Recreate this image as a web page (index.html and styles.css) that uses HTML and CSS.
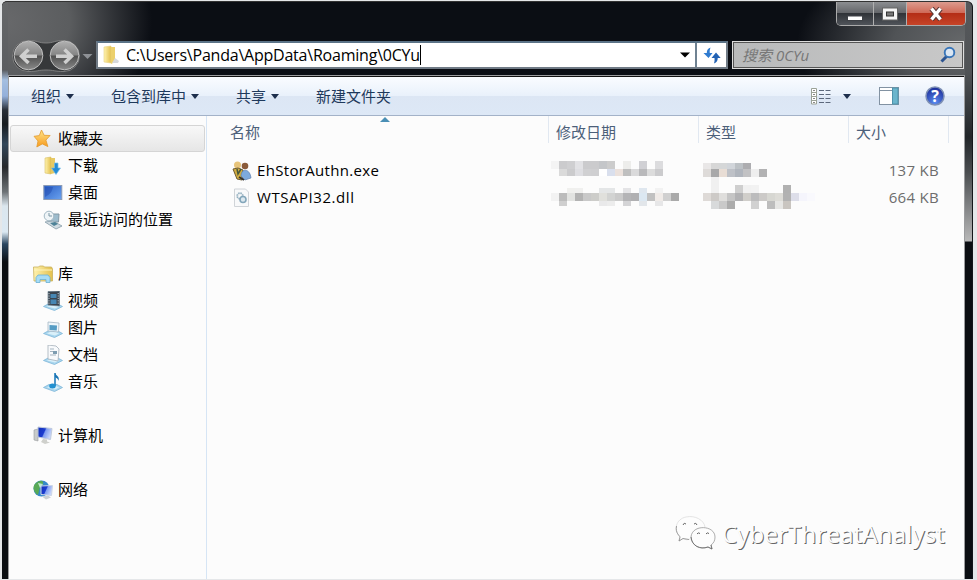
FILE: index.html
```
<!DOCTYPE html>
<html lang="zh-CN">
<head>
<meta charset="utf-8">
<title>0CYu</title>
<link rel="stylesheet" href="styles.css">
</head>
<body>
<svg width="0" height="0" class="defs" aria-hidden="true">
  <defs>
    <linearGradient id="gold" x1="0" x2="1"><stop offset="0" stop-color="#fff3b0"/><stop offset="1" stop-color="#e3c04e"/></linearGradient>
    <linearGradient id="screen" x1="0" y1="0" x2="1" y2=".4"><stop offset="0" stop-color="#1230b8"/><stop offset=".5" stop-color="#1c3cd0"/><stop offset=".58" stop-color="#7f9cf0"/><stop offset="1" stop-color="#c8d6fa"/></linearGradient>
    <linearGradient id="desk" x1="0" y1="0" x2="1" y2="1"><stop offset="0" stop-color="#2a5fc4"/><stop offset="1" stop-color="#6aa2f0"/></linearGradient>
    <linearGradient id="orb" x1="0" y1="0" x2="0" y2="1"><stop offset="0" stop-color="#b0b0b0"/><stop offset=".48" stop-color="#858585"/><stop offset=".52" stop-color="#505050"/><stop offset="1" stop-color="#8a8a8a"/></linearGradient>
    <linearGradient id="star" x1="0" y1="0" x2="0" y2="1"><stop offset="0" stop-color="#ffe58a"/><stop offset="1" stop-color="#f79a1c"/></linearGradient>
    <radialGradient id="help" cx=".5" cy=".85" r=".8"><stop offset="0" stop-color="#5b8cf0"/><stop offset="1" stop-color="#1d2f9c"/></radialGradient>
    <g id="tray"><path d="M.5 15.500l5.500-3h8l5.500 3-8 4z" fill="#a9d6ee" stroke="#7fb6d8" stroke-width=".8"/><path d="M4 15.500l3-1.500h6l3 1.500-4 2z" fill="#d9f0fa"/></g>
  </defs>
</svg>
<div class="window">
  <header class="title">
    <div class="captions">
      <button class="cap min" aria-label="最小化"><svg width="18" height="8"><rect x="1.500" y="2" width="15" height="4.500" fill="#fff" stroke="#3e4146"/></svg></button>
      <button class="cap max" aria-label="最大化"><svg width="18" height="14"><rect x="1.500" y="1" width="15" height="12" fill="#f5f5f5" stroke="#666"/><rect x="5.500" y="5" width="7" height="4" fill="#777" stroke="#333"/></svg></button>
      <button class="cap close" aria-label="关闭"><svg width="18" height="14"><path d="M4.500 1.500l9 11M13.500 1.500l-9 11" stroke="#5a3a38" stroke-width="5.400"/><path d="M4.500 1.500l9 11M13.500 1.500l-9 11" stroke="#fff" stroke-width="3.400"/></svg></button>
    </div>
  </header>
  <div class="nav">
    <svg class="orbs" width="82" height="36" viewBox="0 0 82 36">
      <path d="M17 2.500C27 2.500 27 5 35 5S43 2.500 53 2.500a15.500 15.500 0 0 1 0 31C43 33.500 43 32 35 32S27 33.500 17 33.500a15.500 15.500 0 0 1 0-31z" fill="#36383a" stroke="#8b8b8b" stroke-opacity=".8"/>
      <circle cx="17.500" cy="17.500" r="14.300" fill="url(#orb)" stroke="#c0c0c0"/>
      <circle cx="53.500" cy="17.500" r="14.300" fill="url(#orb)" stroke="#c0c0c0"/>
      <path d="M26 18.200H11.500M17.500 11.500l-7 6.700 7 6.700" fill="none" stroke="#cfcfcf" stroke-width="3.500"/>
      <path d="M45 18.200h14.500M53.500 11.500l7 6.700-7 6.700" fill="none" stroke="#cfcfcf" stroke-width="3.500"/>
      <path d="M71.500 16h10l-5 5z" fill="#8e9196"/>
    </svg>
    <div class="address">
      <svg width="20" height="20" viewBox="0 0 20 20"><path d="M3 2l7-1v17l-7-1z" fill="url(#gold)" stroke="#e6d080" stroke-width=".6"/><path d="M10 2h4v15l-4 2z" fill="#ecd06c"/><path d="M14 13l4 3-1 2h-6z" fill="#d6d9dc"/></svg>
      <span class="path">C:\Users\Panda\AppData\Roaming\0CYu</span><i class="caret"></i>
      <svg class="drop" width="10" height="6"><path d="M0 .5h10L5 5.500z" fill="#000"/></svg>
      <span class="refresh"><svg width="18" height="18" viewBox="0 0 18 18"><path d="M7.500 1.500C4.500 2.500 3.800 4.500 3.800 7H.5L5.500 12 9.500 7H6.800C6.500 4.500 7 3 7.500 1.500z" fill="#2f7bd0"/><path d="M11 17.500c3-1 3.700-3 3.700-5.500h3L13 6.500 8.500 12h3c.2 2.500 0 4-.5 5.500z" fill="#2262b4"/></svg></span>
    </div>
    <div class="search"><span>搜索 0CYu</span><svg width="18" height="18" viewBox="0 0 18 18"><path d="M8 10L2.500 15.500" stroke="#2d5490" stroke-width="3"/><circle cx="10.500" cy="6.500" r="4.800" fill="#dbe6f2" stroke="#3975b8" stroke-width="1.900"/></svg></div>
  </div>
  <div class="client">
    <div class="commands">
      <span class="cmd c1">组织<i></i></span><span class="cmd c2">包含到库中<i></i></span><span class="cmd c3">共享<i></i></span><span class="cmd c4">新建文件夹</span>
      <div class="tools">
        <svg width="20" height="17" viewBox="0 0 20 17"><g fill="#fff" stroke="#9ba297"><path d="M.5.500h5v15.500h-5zM.5 4.500h5M.5 8.500h5M.5 12.500h5"/></g><path d="M2 2.500h2M2 6.500h2M2 10.500h2M2 14.500h2" stroke="#888"/><path d="M8 2.500h12M8 6.500h12M8 10.500h12M8 14.500h12" stroke="#5c687c" stroke-dasharray="5 1.500"/></svg>
        <i class="arrow"></i>
        <svg class="pane" width="20" height="18"><rect x=".5" y=".5" width="19" height="17" fill="#fff" stroke="#8292a2"/><path d="M1 3.500h13" stroke="#8292a2"/><rect x="13.500" y="1" width="5.500" height="16" fill="#6bb5cc" stroke="#4f93ac"/></svg>
        <svg width="20" height="20"><circle cx="10" cy="10" r="9" fill="url(#help)" stroke="#7d8fb4" stroke-width="1.500"/><text x="10" y="15.500" text-anchor="middle" class="qmark">?</text></svg>
      </div>
    </div>
    <div class="panes">
      <nav class="side">
        <div class="row root selected"><svg viewBox="0 0 20 20"><path d="M8.500 1l2.600 5.300 6 .2-4.200 4.600 2 6.500-5.600-2.700L3.800 18 5 12 1 7.300l5.300-.7z" fill="url(#star)" stroke="#e39a2e" stroke-width=".8"/></svg>收藏夹</div>
        <div class="row"><svg viewBox="0 0 20 20"><path d="M2 2l6-1v17l-6-1z" fill="url(#gold)" stroke="#d6bd62" stroke-width=".6"/><path d="M8 2h4v15l-4 1z" fill="#e7c964"/><path d="M11.500 7h3.500v5h2.500l-4.500 6.500L8.500 12h3z" fill="#258bd6" stroke="#76bdea" stroke-width=".7"/></svg>下载</div>
        <div class="row"><svg viewBox="0 0 20 20"><rect x=".8" y="2.500" width="18" height="14" fill="url(#desk)" stroke="#8c9bb4"/><path d="M2 14C8 11 9 8 10 4H2z" fill="#2047aa" opacity=".45"/></svg>桌面</div>
        <div class="row"><svg viewBox="0 0 20 20"><path d="M8 4h8l-.5 8H8z" fill="#9dbccd" stroke="#8499a6"/><circle cx="6" cy="6" r="4.800" fill="#eef4f7" stroke="#a3b8c4"/><path d="M6 3v3h3" stroke="#7b95a3" fill="none"/><path d="M2 12l8-1 9 5-6 3z" fill="#d1dce2" stroke="#98abb6"/><path d="M7 13l5-1 3 2-4 2z" fill="#4d8297"/></svg>最近访问的位置</div>
        <div class="row root group"><svg viewBox="0 0 20 20"><path d="M.5 3h5l1-1h4l1 1h7l1 2v12H1z" fill="url(#gold)" stroke="#c9b15d" stroke-width=".8"/><path d="M1 6h18" stroke="#fff5bd"/><path d="M3 18.500v-5l2-2.500h10l2 2.500v5h-4v-3H7v3z" fill="#a7dcf5" stroke="#69b0d4" stroke-width=".8"/></svg>库</div>
        <div class="row"><svg viewBox="0 0 20 20"><use href="#tray"/><path d="M5 .5l11.500-.5v15L5 14z" fill="#3b4550" stroke="#6a7e8d" stroke-width=".7"/><path d="M7.500 3h6v4h-6zM7.500 8.500h6V13h-6z" fill="#4787b4"/><path d="M6 2v12M15.200 2v12" stroke="#bccad3" stroke-dasharray="1.200"/></svg>视频</div>
        <div class="row"><svg viewBox="0 0 20 20"><use href="#tray"/><path d="M5 4l11 1-.5 9L5 13z" fill="#eff6fa" stroke="#a6b8c5" stroke-width=".8"/><path d="M6.500 7l7.500.5-.3 5-7.200-.5z" fill="#559cc4"/></svg>图片</div>
        <div class="row"><svg viewBox="0 0 20 20"><use href="#tray"/><path d="M5 0l8 1 3 3-1 12-10-2z" fill="#f8fafc" stroke="#a5b0ba" stroke-width=".8"/><path d="M7 4h4M7 6.500h3M7 10h6" stroke="#a6b5c1"/><path d="M10 6h4v3h-4z" fill="#7d9db1"/></svg>文档</div>
        <div class="row"><svg viewBox="0 0 20 20"><use href="#tray"/><path d="M12 1v13" stroke="#207ebd" stroke-width="1.600"/><path d="M12 1c1 3 5 3 3.500 8C15 6 13 6 12 5z" fill="#1a74b3"/><ellipse cx="9.500" cy="14" rx="3.300" ry="2.500" fill="#2190d0"/></svg>音乐</div>
        <div class="row root group"><svg viewBox="0 0 20 20"><path d="M1 4l4-1v12l-4-1z" fill="#c8cbca" stroke="#989c9e" stroke-width=".6"/><path d="M5 1l14 1.500-1.500 11L5 11z" fill="url(#screen)" stroke="#c1cbdc"/><path d="M10 13l4 .5v2l3 1-5 1.500-4-2z" fill="#cfd0cc"/></svg>计算机</div>
        <div class="row root group"><svg viewBox="0 0 20 20"><circle cx="8.500" cy="8.500" r="8" fill="#3589ca"/><path d="M3 3c5-4 8-2 7 1l-3 3-2 8C0 12-1 6 3 3z" fill="#58a956"/><path d="M5 3l5 1-3 4z" fill="#c0ead1"/><path d="M8 6l11.500-.5-1 10-10.500-1z" fill="url(#screen)" stroke="#ccd6e6"/><path d="M9 16.500l6-1 3 2-5 2z" fill="#cbd0d4"/></svg>网络</div>
      </nav>
      <main class="files">
        <div class="cols head"><span>名称</span><span>修改日期</span><span>类型</span><span>大小</span></div>
        <svg class="sort" width="10" height="5"><path d="M0 5l5-5 5 5z" fill="#4a8fb5"/></svg>
        <div class="cols file"><span class="name"><svg width="20" height="20" viewBox="0 0 20 20"><circle cx="5.500" cy="4" r="3.500" fill="#e7c47b"/><circle cx="13" cy="5" r="3.300" fill="#8b5b3a"/><path d="M1 8l5-1 5 2-1 10-5-1z" fill="#d2ad40" stroke="#6b5a32"/><path d="M5 8l1 5 3-5" stroke="#47583b" stroke-width="1.500" fill="none"/><path d="M9 15c0-8 9-8 10 2l-6 2z" fill="#7daadd" stroke="#5576a4" stroke-width=".6"/><path d="M7 16l5 3" stroke="#333" stroke-width="2"/></svg><b class="exe">EhStorAuthn.exe</b></span><span></span><span></span><span class="size">137 KB</span></div>
        <div class="cols file"><span class="name"><svg width="20" height="20" viewBox="0 0 20 20"><path d="M2.500 1h11l3 3v14.500h-14z" fill="#f8f9fa" stroke="#d0d4d8"/><circle cx="8" cy="8" r="2.800" fill="none" stroke="#93afbf" stroke-width="1.800" stroke-dasharray="1.500 .7"/><circle cx="11" cy="11.500" r="3" fill="#dce8ef" stroke="#83a6ba" stroke-width="1.600"/></svg><b class="dll">WTSAPI32.dll</b></span><span></span><span></span><span class="size">664 KB</span></div>
        <svg class="mosaic" id="mosaic" width="264" height="52" viewBox="551 161 264 52" shape-rendering="crispEdges"></svg>
        <div class="brand"><svg width="42" height="36" viewBox="0 0 42 36"><path d="M15 23c-2 1-5 1-7-.5L4 25l1-4C-2 14 1 3 11 1c9-2 18 3 19 10" fill="#fdfdfd" stroke="#ddd" stroke-width=".8"/><path d="M1.500 10C0 17 5 20 5 21l-1 4 4-2.500 6 1" fill="none" stroke="#888" stroke-width=".8"/><path d="M40 21c0-12-23-13-24 0 0 8 9 13 17 10l4 2-1-4c3-2 4-5 4-8z" fill="#fdfdfd" stroke="#999" stroke-width=".8"/><path d="M16 21c1 9 9 13 17 10l4 2-1-4" fill="none" stroke="#666" stroke-width=".8"/><path d="M8 9q1-3 3-1M19 8q2-2 3 1M22 18q1-2 3-.500M31 18q1-2 3-.500" fill="none" stroke="#666"/></svg><span>CyberThreatAnalyst</span></div>
      </main>
    </div>
  </div>
</div>
<script src="mosaic.js"></script>
</body>
</html>
```
FILE: styles.css
```
* { box-sizing: border-box; }
body { margin: 0; width: 977px; height: 580px; overflow: hidden; background: #e5e7e9; padding: 1px 4px 1px 2px; font: 15px/27px "Open Sans", "Noto Sans CJK SC", sans-serif; color: #000; }
.defs { position: absolute; }
.window { height: 578px; padding: 0 8px 0 6px; display: flex; flex-direction: column; border-top: 1px solid #333; border-right: 1px solid #14171a; border-radius: 5px 6px 0 0;
  background:
    linear-gradient(180deg, #56585b 0, #505356 70px, #222629 135px, #4a4d50 170px, #b8b8b8 239px, #0b0e12 240px) right / 7px 100% no-repeat,
    linear-gradient(180deg, #66686a 0, #5b5d60 68px, #a5bfe0 78px, #94b0da 94px, #2a3038 108px, #181c20 122px, #33475a 142px, #26282b 165px, #6d7276 190px, #dbe6ee 204px, #dbe8f2 230px, #2b4660 242px, #0b0e12 260px, #0b0e12 100%) left / 6px 100% no-repeat,
    radial-gradient(ellipse 150px 120px at 0 20px, #68696b 0, #5b5d5f 45%, transparent 100%),
    radial-gradient(ellipse 175px 95px at 100% 42px, #686a6c 0, #505356 45%, transparent 100%),
    #0b0e14; }
.title { height: 35px; display: flex; justify-content: flex-end; flex: none; }
.captions { display: flex; height: 24px; width: 130px; margin-right: -2px; border: 1px solid #aaa; border-top: 0; border-radius: 0 0 5px 5px; overflow: hidden; }
.cap { border: 0; padding: 0; display: flex; align-items: center; justify-content: center; background: linear-gradient(#8c8e91 0, #65676b 46%, #303338 50%, #50545a 100%); }
.cap + .cap { border-left: 1px solid #b0b0b0; }
.min { width: 36px; padding-top: 8px; }
.max { width: 33px; }
.close { flex: 1; background: linear-gradient(#dc9b8e 0, #cf6b59 46%, #b42d16 50%, #c64428 100%); }
.nav { height: 37px; display: flex; align-items: center; flex: none; padding-bottom: 2px; }
.orbs { margin-left: 3px; margin-top: 2px; flex: none; }
.address { margin-left: 3px; width: 632px; height: 28px; margin-top: 1px; border: 2px solid #707b86; border-top-color: #5b7387; background: #fff; display: flex; align-items: center; font-size: 16px; flex: none; }
.address > svg:first-child { margin: 0 5px 0 3px; }
.path { letter-spacing: -.22px; white-space: pre; }
.caret { width: 1px; height: 20px; background: #000; }
.drop { margin-left: auto; margin-right: 5px; }
.refresh { width: 31px; height: 24px; border-left: 2px solid #6f8292; display: flex; align-items: center; justify-content: center; }
.search { width: 232px; height: 28px; margin: 1px 0 0 4px; border: 1px solid #ddd; outline: 1px solid #555; outline-offset: -2px; background: linear-gradient(90deg, #b9babb, #c8c8c8); display: flex; align-items: center; justify-content: space-between; padding: 0 6px 0 9px; font-style: italic; color: #777; flex: none; }
.client { flex: 1; min-height: 0; border: 1px solid #9b9c9e; border-bottom: 0; margin: 1px 0 0; width: 957px; background: #fcfcfc; display: flex; flex-direction: column; }
.commands { height: 40px; flex: none; border-top: 1px solid #111; border-bottom: 1px solid #a3b2c8; display: flex; align-items: center; color: #1e395b; background: linear-gradient(#fafcff 0, #e9f1fb 49%, #dce6f4 50%, #dde8f6 100%); padding-left: 22px; }
.cmd { display: flex; align-items: center; gap: 5px; white-space: nowrap; flex: none; }
.cmd i, .arrow { border: 4px solid transparent; border-top: 5px solid #1e2f4d; border-bottom: 0; }
.c1 { width: 80px; } .c2 { width: 125px; } .c3 { width: 80px; }
.tools { margin-left: auto; display: flex; align-items: center; padding-right: 19px; }
.arrow { margin: 0 28px 0 12px; }
.pane { margin-right: 26px; }
.qmark { font: bold 16px "Open Sans", sans-serif; fill: #fff; }
.panes { flex: 1; min-height: 0; display: flex; }
.side { width: 198px; flex: none; border-right: 1px solid #d6e5f5; padding: 9px 1px 0; }
.row { height: 27px; display: flex; align-items: center; gap: 5px; padding-left: 33px; white-space: nowrap; }
.row svg { width: 20px; height: 20px; flex: none; }
.row.root { padding-left: 23px; }
.row.group { margin-top: 27px; }
.row.selected { border: 1px solid #d5d5d5; border-radius: 3px; background: linear-gradient(#f8f8f8, #e6e6e6); padding-left: 22px; }
.files { flex: 1; min-width: 0; position: relative; }
.cols { display: grid; grid-template-columns: 342px 150px 150px 100px; height: 27px; }
.head { color: #4c607a; margin-bottom: 14px; }
.head span { padding: 3px 0 0 7px; height: 27px; line-height: 27px; border-right: 1px solid #e1e8f1; }
.head span:first-child { padding-left: 23px; }
.name { display: flex; align-items: center; padding-left: 25px; gap: 5px; }
.name b { font-weight: 400; }
.exe { letter-spacing: .33px; }
.dll { letter-spacing: .55px; }
.size { color: #6d6d6d; text-align: right; padding-right: 10px; letter-spacing: .3px; }
.sort { position: absolute; left: 173px; top: 1px; }
.mosaic { position: absolute; left: 344px; top: 45px; }
.brand { position: absolute; left: 468px; top: 400px; display: flex; align-items: center; gap: 5px; font-size: 24px; line-height: 36px; letter-spacing: .2px; color: #fcfcfc; text-shadow: 1px 1px 0 #666; white-space: nowrap; }
```
FILE: mosaic.js
```
// Pixelated cells: [y, height, first x, colours per 8px cell ("-" leaves a gap)]
const rows = [
  [161, 8, 551, "f4f4f4 cbcbcd cfcfd1 e2e2e5 cbcbcd cbcbcd c4c6c9 cccccc - ededeb - d0d0d4 - dcdcde"],
  [169, 7, 559, "dadada cbcbcd dedee2 d0d0d2 cfcfd1 ffffff d9dfed ebe1dc bfbfbf dadadb b9b9bb dcdcdc cbcbcd"],
  [188, 5, 567, "f0f0ee f0f0ef - - e4e6e7 e4e6e7 - e4e4e6 - dfe7ef - f2f2f2"],
  [193, 8, 551, "f2f2f2 bcbcbc e2e3e1 b3b3b3 c9c9c9 cdcdca e0e0dc d2d3d2 cacaca b4b4b6 b0b0b2 dce8f2 c1c1c1 f0ebe8 d0d0d0 aaaaaa"],
  [201, 5, 559, "cfcfcf - - - - e9e9ea ececec - d4d4d6 - e2e6ea - e7e7e8"],
  [163, 6, 703, "e9e7e7 d7d7d7 d5d7d8 d1d5da bcc1c5 adadb0"],
  [169, 8, 703, "dedbd9 a8a8a9 e8ddd5 bec1c7 b0b5bd c2c2c4 eeeeee b2b2b3"],
  [177, 16, 711, "f0f0f0"],
  [185, 8, 735, "cfcfcf f1f1f1 f2f2f2 - - - b1b1b1"],
  [193, 8, 703, "dedad7 cdcac7 dfdedc c5c5c5 b2b2b4 d0ceca bcbcbd cccac8 d7d7d2 dddcd7 b2b2b2 dddee9 f5f5fc f9f9fd"],
  [201, 8, 711, "d8dadb c9c9c9 acacac - - d1d1d1 - bdbdbd e6e6e4 c9c5c0"]
];
const svg = document.getElementById("mosaic");
for (const [y, h, x0, list] of rows) {
  list.split(" ").forEach((c, i) => {
    if (c === "-") return;
    const r = document.createElementNS("http://www.w3.org/2000/svg", "rect");
    Object.entries({ x: x0 + i * 8, y, width: 8, height: h, fill: "#" + c }).forEach(([k, v]) => r.setAttribute(k, v));
    svg.append(r);
  });
}
```
